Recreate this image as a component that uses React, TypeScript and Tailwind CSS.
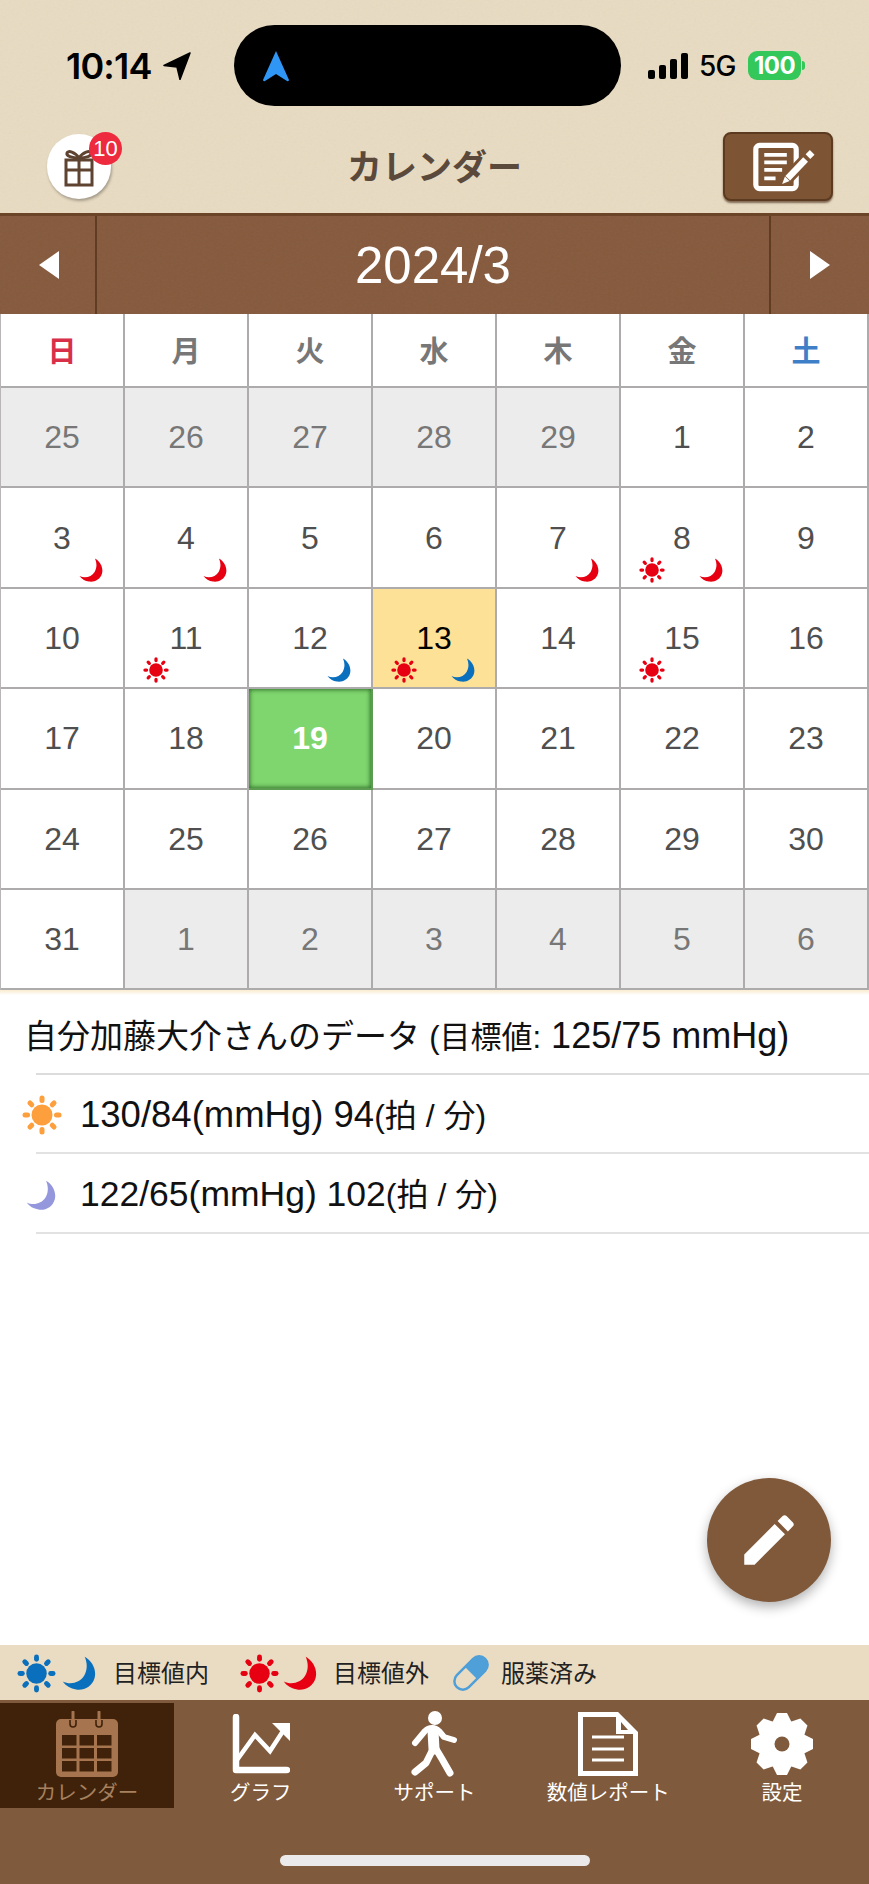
import React from "react";

const SunIcon = ({ color, size }: { color: string; size: number }) => (
  <svg width={size} height={size} viewBox="0 0 40 40" className="block shrink-0">
    <circle cx="20" cy="20" r="10.5" fill={color} />
    {[0, 45, 90, 135, 180, 225, 270, 315].map((a) => (
      <line key={a} x1="20" y1="3" x2="20" y2="5.5" stroke={color} strokeWidth="5" strokeLinecap="round" transform={`rotate(${a} 20 20)`} />
    ))}
  </svg>
);

const MoonIcon = ({ color, size }: { color: string; size: number }) => (
  <svg width={size} height={size} viewBox="0 0 24 24" className="block shrink-0">
    <path d="M16 0.5C21.5 3.5 24.5 10 23 15.5C21.3 21.5 15.5 24.5 10 23.6C6 23 2.6 21 0.5 18C6 20.6 12.5 19 15.6 14C18 10 18 5 16 0.5Z" fill={color} />
  </svg>
);

const RED = "#e60012";
const BLUE = "#0a6fbd";

type Day = { n: number; off?: boolean; sun?: boolean; moon?: boolean; blue?: boolean; today?: boolean; sel?: boolean };

const days: Day[] = [
  { n: 25, off: true }, { n: 26, off: true }, { n: 27, off: true }, { n: 28, off: true }, { n: 29, off: true }, { n: 1 }, { n: 2 },
  { n: 3, moon: true }, { n: 4, moon: true }, { n: 5 }, { n: 6 }, { n: 7, moon: true }, { n: 8, sun: true, moon: true }, { n: 9 },
  { n: 10 }, { n: 11, sun: true }, { n: 12, moon: true, blue: true }, { n: 13, sun: true, moon: true, blue: true, sel: true }, { n: 14 }, { n: 15, sun: true }, { n: 16 },
  { n: 17 }, { n: 18 }, { n: 19, today: true }, { n: 20 }, { n: 21 }, { n: 22 }, { n: 23 },
  { n: 24 }, { n: 25 }, { n: 26 }, { n: 27 }, { n: 28 }, { n: 29 }, { n: 30 },
  { n: 31 }, { n: 1, off: true }, { n: 2, off: true }, { n: 3, off: true }, { n: 4, off: true }, { n: 5, off: true }, { n: 6, off: true },
];

const weekdays = [
  { t: "日", c: "text-[#d9304a]" }, { t: "月", c: "text-[#777777]" }, { t: "火", c: "text-[#777777]" }, { t: "水", c: "text-[#777777]" },
  { t: "木", c: "text-[#777777]" }, { t: "金", c: "text-[#777777]" }, { t: "土", c: "text-[#3f7fc8]" },
];

const Leather = ({ op }: { op: string }) => (
  <svg className={`absolute inset-0 w-full h-full pointer-events-none ${op}`} aria-hidden="true">
    <filter id="lt"><feTurbulence type="fractalNoise" baseFrequency="0.35 0.55" numOctaves="3" /><feColorMatrix type="saturate" values="0" /></filter>
    <rect width="100%" height="100%" filter="url(#lt)" />
  </svg>
);

const CalendarTab = () => (
  <svg width="62" height="66" viewBox="0 0 62 66">
    <rect x="0" y="8" width="62" height="58" rx="5" fill="#a6754f" />
    {[6, 23.5, 41].map((x) => [24, 37, 50].map((y) => <rect key={`${x}-${y}`} x={x} y={y} width="14.5" height="10.5" fill="#3f2209" />))}
    {[17, 43].map((x) => (
      <g key={x}>
        <line x1={x} y1="1" x2={x} y2="12" stroke="#a6754f" strokeWidth="3" strokeLinecap="round" />
        <path d={`M${x - 3} 9V13a3 3 0 0 0 6 0V9`} fill="none" stroke="#3f2209" strokeWidth="1.6" />
      </g>
    ))}
  </svg>
);

const ChartTab = () => (
  <svg width="58" height="60" viewBox="0 0 58 60">
    <path d="M4 3V56H55" fill="none" stroke="#fff" strokeWidth="6.5" strokeLinecap="round" strokeLinejoin="round" />
    <path d="M5 46L23 21L38 37L53 14" fill="none" stroke="#fff" strokeWidth="4.5" />
    <path d="M40 9H58V27Z" fill="#fff" />
  </svg>
);

const WalkTab = () => (
  <svg width="46" height="66" viewBox="0 0 46 66">
    <circle cx="24" cy="7" r="7" fill="#fff" />
    <path d="M22 20L23 38" stroke="#fff" strokeWidth="11" strokeLinecap="round" />
    <path d="M4 32L14 20C18 16 24 16 28 20L33 26L43 29" fill="none" stroke="#fff" strokeWidth="6" strokeLinecap="round" strokeLinejoin="round" />
    <path d="M22 38L15 52L4 61" fill="none" stroke="#fff" strokeWidth="7" strokeLinecap="round" strokeLinejoin="round" />
    <path d="M25 38L31 48L39 62" fill="none" stroke="#fff" strokeWidth="7" strokeLinecap="round" strokeLinejoin="round" />
  </svg>
);

const DocTab = () => (
  <svg width="60" height="64" viewBox="0 0 60 64">
    <path d="M2.5 2.5H39L57.5 21V61.5H2.5Z" fill="none" stroke="#fff" strokeWidth="5" />
    <path d="M38 2L58 22H38Z" fill="#fff" />
    <path d="M43 10L50 18H43Z" fill="#7f5a3c" />
    {[25, 37, 48].map((y) => <line key={y} x1="14" y1={y} x2="46" y2={y} stroke="#fff" strokeWidth="3" />)}
  </svg>
);

const GearTab = () => (
  <svg width="62" height="62" viewBox="-31 -31 62 62">
    <circle r="23" fill="#fff" />
    {[0, 45, 90, 135, 180, 225, 270, 315].map((a) => (
      <polygon key={a} points="-5,-31 5,-31 12,-17 -12,-17" fill="#fff" transform={`rotate(${a})`} />
    ))}
    <circle r="7.5" fill="#7f5a3c" />
  </svg>
);

const tabs = [
  { label: "カレンダー", icon: <CalendarTab />, active: true },
  { label: "グラフ", icon: <ChartTab /> },
  { label: "サポート", icon: <WalkTab /> },
  { label: "数値レポート", icon: <DocTab /> },
  { label: "設定", icon: <GearTab /> },
];

export default function App() {
  return (
    <div className="w-[869px] h-[1884px] flex flex-col bg-white font-['Liberation_Sans','Noto_Sans_CJK_JP',sans-serif] overflow-hidden">
      {/* header */}
      <div className="relative h-[213px] shrink-0 bg-[#e8dbc2]">
        <Leather op="opacity-[0.06]" />
        <div className="relative grid grid-cols-[234px_387px_248px] pt-[25px]">
          <div className="flex items-center h-[81px] pl-[66px] gap-[10px]">
            <span className="font-['Inter',sans-serif] font-semibold text-[36px] tracking-[-0.8px] text-black">10:14</span>
            <svg width="29" height="28" viewBox="0 0 29 28"><path d="M28 1L2 13.5L15 15L18 27.5Z" fill="#000" stroke="#000" strokeWidth="1.5" strokeLinejoin="round" /></svg>
          </div>
          <div className="flex items-center h-[81px] bg-black rounded-[41px] pl-[28px]">
            <svg width="28" height="32" viewBox="0 0 28 32"><path d="M14 1L27 30C27 31 26 31.5 25 31L14 24L3 31C2 31.5 1 31 1 30Z" fill="#2f96f5" /></svg>
          </div>
          <div className="flex items-center h-[81px] pl-[27px]">
            <svg width="40" height="26" viewBox="0 0 40 26">
              <rect x="0" y="17" width="7" height="9" rx="2" fill="#000" />
              <rect x="11" y="12" width="7" height="14" rx="2" fill="#000" />
              <rect x="22" y="6" width="7" height="20" rx="2" fill="#000" />
              <rect x="33" y="0" width="7" height="26" rx="2" fill="#000" />
            </svg>
            <span className="ml-[11px] w-[40px] font-['Inter',sans-serif] text-[28px] font-medium tracking-[-0.8px] text-black">5G</span>
            <span className="ml-[9px] flex items-center justify-center w-[53px] h-[29px] rounded-[9px] bg-[#34c759] font-['Inter',sans-serif] text-[24px] font-bold text-white tracking-[-0.5px]">100</span>
            <span className="ml-[1px] w-[3px] h-[9px] rounded-r-full bg-[#34c759]" />
          </div>
        </div>
        <div className="relative flex items-center justify-between mt-[26px] pl-[47px] pr-[36px]">
          <div className="relative flex items-center justify-center w-[64px] h-[65px] rounded-full bg-white shadow-[1px_2px_3px_rgba(0,0,0,0.3)]">
            <svg width="32" height="38" viewBox="0 0 32 38" className="mt-[2px]">
              <path d="M16 9C12 3 5 1 4 4C3 7 9 9 16 9C23 9 29 7 28 4C27 1 20 3 16 9Z" fill="none" stroke="#5e4331" strokeWidth="3" />
              <rect x="3" y="11" width="26" height="25" fill="none" stroke="#5e4331" strokeWidth="3" />
              <line x1="16" y1="10" x2="16" y2="36" stroke="#5e4331" strokeWidth="3" />
              <line x1="3" y1="21" x2="29" y2="21" stroke="#5e4331" strokeWidth="3" />
            </svg>
            <span className="absolute left-[42px] -top-[2px] flex items-center justify-center w-[33px] h-[33px] rounded-full bg-[#ee2a3f] text-white text-[22px]">10</span>
          </div>
          <h1 className="absolute left-0 right-0 pt-[3px] text-center text-[35px] font-semibold text-[#5b4a3c] pointer-events-none">カレンダー</h1>
          <button className="relative flex items-center justify-center w-[110px] h-[69px] rounded-[8px] bg-[#7d5535] border-2 border-[#5c3a1f] shadow-[0_2px_2px_rgba(60,30,10,0.6)]">
            <svg width="62" height="50" viewBox="0 0 66 52" className="ml-[12px]">
              <rect x="3" y="3" width="43" height="46" rx="4" fill="none" stroke="#fff" strokeWidth="5.5" />
              <path d="M12 13H36M12 21H36M12 29H31M12 38H24" stroke="#fff" strokeWidth="4" />
              <line x1="34" y1="41" x2="57" y2="17" stroke="#7d5535" strokeWidth="13" />
              <line x1="37" y1="38" x2="56" y2="18" stroke="#fff" strokeWidth="7" />
              <path d="M31 44L34 36L39 41Z" fill="#fff" />
              <line x1="58.5" y1="15" x2="63" y2="10.5" stroke="#fff" strokeWidth="7" />
            </svg>
          </button>
        </div>
      </div>

      {/* month bar */}
      <div className="relative grid grid-cols-[97px_1fr_100px] h-[101px] shrink-0 bg-[#85593c] border-t-[3px] border-[#6c4528]">
        <Leather op="opacity-[0.05]" />
        <div className="relative flex items-center justify-center border-r-2 border-[#5f3c22]">
          <svg width="22" height="28" viewBox="0 0 22 28" className="ml-[2px]"><path d="M21 0V28L1 14Z" fill="#fff" /></svg>
        </div>
        <div className="relative flex items-center justify-center text-white text-[51px] leading-none">2024/3</div>
        <div className="relative flex items-center justify-center border-l-2 border-[#5f3c22]">
          <svg width="22" height="28" viewBox="0 0 22 28"><path d="M1 0V28L21 14Z" fill="#fff" /></svg>
        </div>
      </div>

      {/* calendar */}
      <div className="grid grid-cols-7 shrink-0 auto-rows-[100.4px] grid-rows-[74px] border-l border-[#b8b6b6]">
        {weekdays.map((w) => (
          <div key={w.t} className={`flex items-center justify-center pt-[6px] bg-white border-r-2 border-b-2 border-[#adabab] text-[29px] font-semibold ${w.c}`}>{w.t}</div>
        ))}
        {days.map((d, i) => {
          const bg = d.today ? "bg-[#80d66e] shadow-[inset_0_0_4px_1px_rgba(30,90,30,0.8)]" : d.sel ? "bg-[#fde196]" : d.off ? "bg-[#ececec]" : "bg-white";
          const tc = d.today ? "text-white font-semibold" : d.sel ? "text-black" : d.off ? "text-[#777777]" : "text-[#4f4f4f]";
          return (
            <div key={i} className={`relative flex items-center justify-center border-r-2 border-b-2 text-[32px] ${d.today ? "border-[#5c9c50]" : "border-[#adabab]"} ${bg} ${tc}`}>
              {d.n}
              {d.sun && <span className="absolute left-[18px] bottom-[4px]"><SunIcon color={RED} size={26} /></span>}
              {d.moon && <span className="absolute right-[20px] bottom-[5px]"><MoonIcon color={d.blue ? BLUE : RED} size={24} /></span>}
            </div>
          );
        })}
      </div>
      <div className="h-[5px] shrink-0 bg-gradient-to-b from-[#f9ecd0] to-white" />

      {/* data + FAB */}
      <div className="relative flex-1 min-h-0 text-[#111111] text-[32px]">
        <div className="flex items-center h-[80px] pt-[3px] ml-[36px] border-b-2 border-[#dcdcdc]">
          <span className="-ml-[12px] whitespace-nowrap text-[33px]">自分加藤大介さんのデータ <span className="text-[31px]">(目標値:</span><span className="text-[36px]"> 125/75 mmHg)</span></span>
        </div>
        <div className="flex items-center h-[79px] pt-[3px] ml-[36px] border-b-2 border-[#e2e2e2]">
          <span className="-ml-[14px] mr-[18px]"><SunIcon color="#fd9f3c" size={40} /></span>
          <span className="whitespace-nowrap"><span className="text-[36.5px]">130/84(mmHg) 94</span>(拍 / 分)</span>
        </div>
        <div className="flex items-center h-[80px] pt-[3px] ml-[36px] border-b-2 border-[#e2e2e2]">
          <span className="-ml-[10px] mr-[24px]"><MoonIcon color="#9497dc" size={30} /></span>
          <span className="whitespace-nowrap"><span className="text-[35.5px]">122/65(mmHg) 102</span>(拍 / 分)</span>
        </div>
        <button className="absolute left-[707px] top-[483px] flex items-center justify-center w-[124px] h-[124px] rounded-full bg-[#80593a] shadow-[0_5px_12px_rgba(0,0,0,0.3)]">
          <svg width="66" height="66" viewBox="0 0 24 24"><path fill="#fff" d="M3 17.25V21h3.75L17.81 9.94l-3.75-3.75L3 17.25zM20.71 7.04c.39-.39.39-1.02 0-1.41l-2.34-2.34c-.39-.39-1.02-.39-1.41 0l-1.83 1.83 3.75 3.75 1.83-1.83z" /></svg>
        </button>
      </div>

      {/* legend */}
      <div className="flex items-center h-[55px] shrink-0 bg-[#eadcc3] pl-[17px] pt-[1px] text-[24px] text-[#222222]">
        <SunIcon color={BLUE} size={39} />
        <span className="ml-[6px]"><MoonIcon color={BLUE} size={34} /></span>
        <span className="ml-[17px] pt-[2px]">目標値内</span>
        <span className="ml-[31px]"><SunIcon color={RED} size={39} /></span>
        <span className="ml-[4px]"><MoonIcon color={RED} size={34} /></span>
        <span className="ml-[16px] pt-[2px]">目標値外</span>
        <svg width="36" height="36" viewBox="0 0 36 36" className="ml-[24px]">
          <g transform="rotate(-45 18 18)">
            <rect x="-2" y="9.5" width="40" height="17" rx="8.5" fill="#eadcc3" stroke="#4f9fd8" strokeWidth="2.5" />
            <path d="M18 9.5H29.5a8.5 8.5 0 0 1 0 17H18Z" fill="#4f9fd8" />
          </g>
        </svg>
        <span className="ml-[12px] pt-[2px]">服薬済み</span>
      </div>

      {/* tab bar */}
      <div className="relative h-[184px] shrink-0 bg-[#7f5a3c] pt-[3px]">
        <div className="grid grid-cols-5">
          {tabs.map((t) => (
            <div key={t.label} className={`flex flex-col items-center h-[105px] ${t.active ? "bg-[#3f2209] text-[#a6805f]" : "text-white"}`}>
              <div className="flex items-center justify-center h-[77px] pt-[4px]">{t.icon}</div>
              <span className="text-[20.5px] leading-[26px] whitespace-nowrap">{t.label}</span>
            </div>
          ))}
        </div>
        <div className="mt-[47px] ml-[280px] w-[310px] h-[11px] rounded-full bg-[#ebe9e9]" />
      </div>
    </div>
  );
}
